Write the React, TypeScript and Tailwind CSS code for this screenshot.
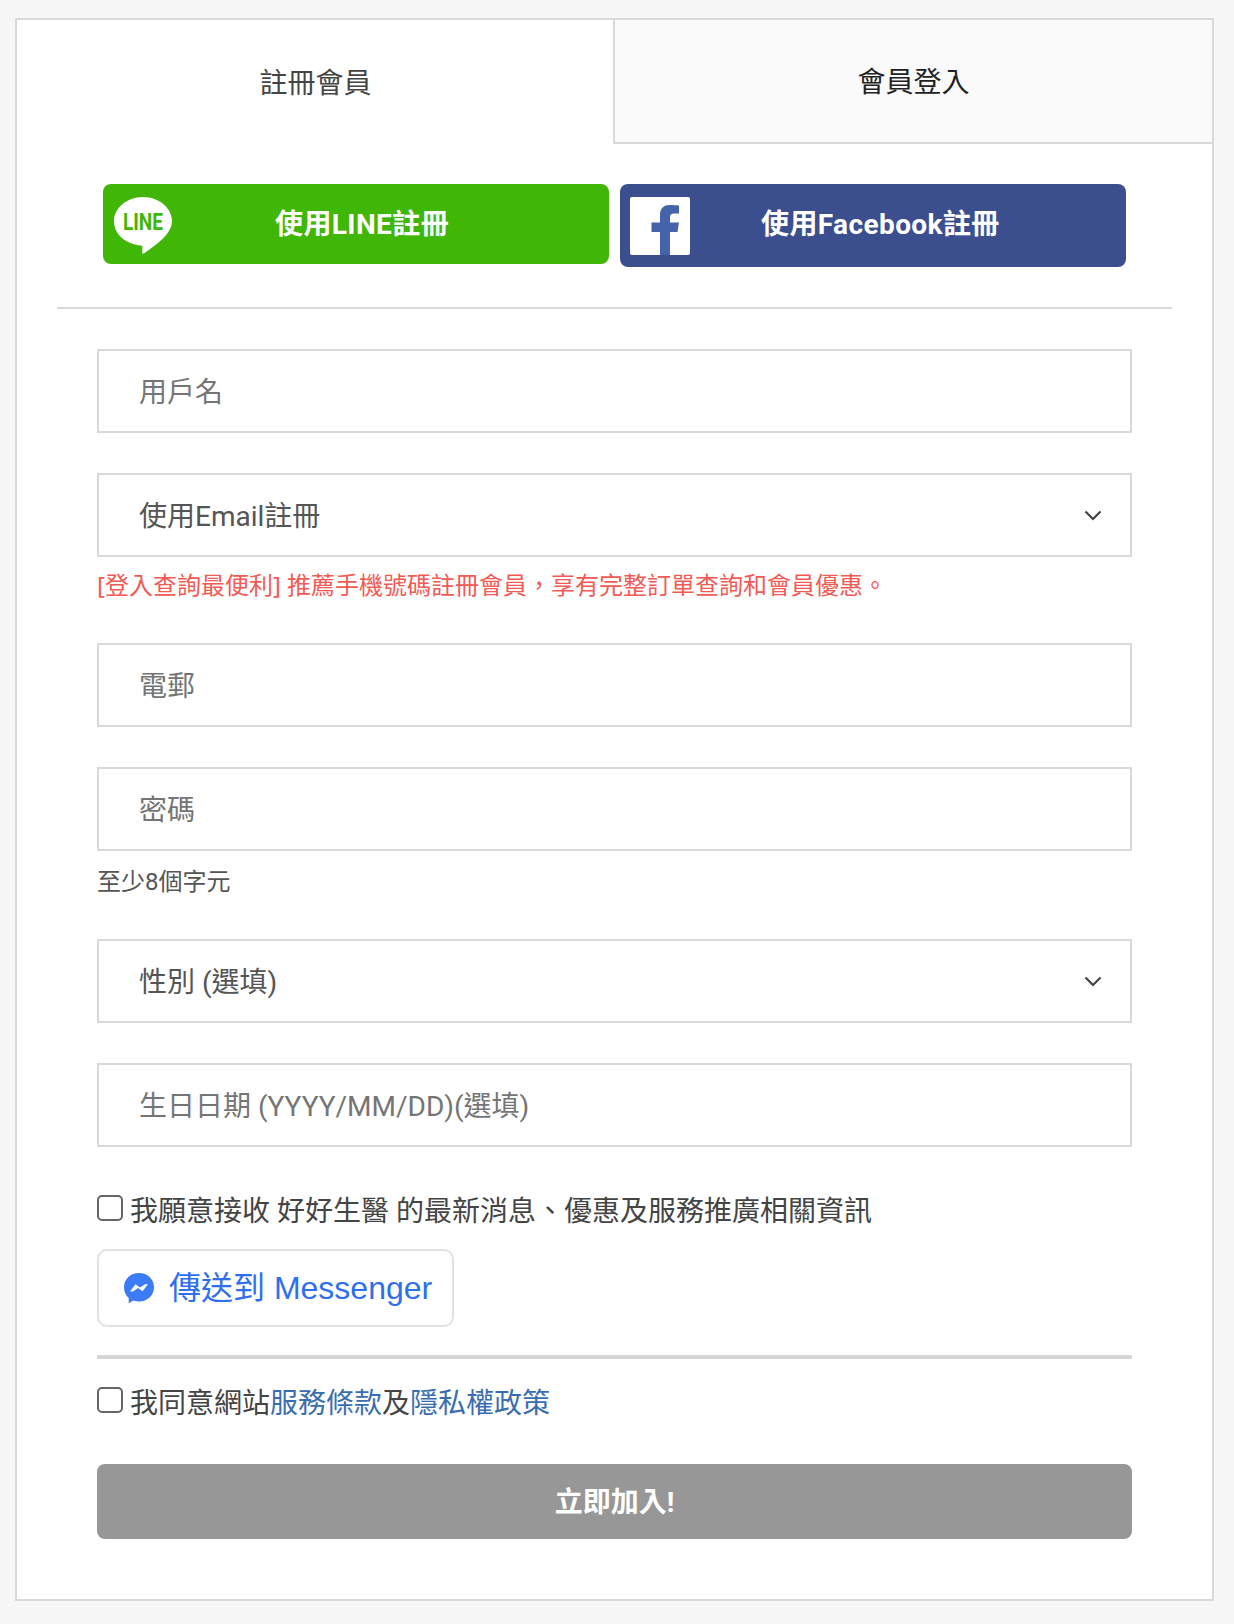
import React from "react";

const fieldClass =
  "flex h-[84px] items-center border-2 border-[#d9d9d9] bg-white pl-[40px] pr-[28px] pt-[3px] text-[28px] leading-none";

const Chevron = () => (
  <svg width="18" height="11" viewBox="0 0 18 11" fill="none" stroke="#444444" strokeWidth="2.2" className="mb-[3px] shrink-0">
    <path d="M1.5 1.5 L9 9 L16.5 1.5" />
  </svg>
);

const LineLogo = () => (
  <svg width="60" height="58" viewBox="0 0 60 58" className="mt-[2px] shrink-0">
    <path d="M30 1C14 1 1 12 1 25c0 14 12 23 27 24.500.8.1 1.400.8 1.400 1.600l-.2 5.400c0 1 1 1.400 1.700.9C40 51 59 39 59 25 59 12 46 1 30 1Z" fill="#ffffff" />
    <text x="30" y="34" textAnchor="middle" fontSize="24" fontWeight="700" fill="#40b606" fontFamily="Roboto, sans-serif" textLength="40" lengthAdjust="spacingAndGlyphs">
      LINE
    </text>
  </svg>
);

const FacebookLogo = () => (
  <svg width="60" height="58" viewBox="0 0 60 58" className="shrink-0">
    <rect width="60" height="58" rx="2" fill="#ffffff" />
    <path d="M30 58V35h-8.500v-9.500H30V18c0-7 4-10 10-10 3 0 7 .2 9 .5v8h-5c-3 0-4 1.500-4 4v5h9l-1.500 9.500H40v23Z" fill="#4463ab" />
  </svg>
);

const MessengerLogo = () => (
  <svg width="32" height="32" viewBox="0 0 32 32" className="shrink-0">
    <path d="M16 1C7.500 1 1 7 1 15.300c0 4.400 1.800 8.200 4.700 10.800v5.200l4.800-2.700c1.700.6 3.500.9 5.500.9 8.500 0 15-6 15-14.200S24.500 1 16 1Z" fill="#3b7bf6" />
    <path d="M7 19.500l5.500-7.200 4.500 3.300 5-3.300 3 0-5.500 7-4.500-3.300-5 3.500Z" fill="#ffffff" />
  </svg>
);

const Checkbox = () => (
  <span className="mb-[4px] h-[26px] w-[26px] shrink-0 rounded-[5px] border-2 border-[#666666] bg-white" />
);

export default function App() {
  return (
    <div className="min-h-[1624px] bg-[#f7f7f7] pl-[15px] pt-[18px] font-['Roboto','Noto_Sans_CJK_TC',sans-serif]">
      <div className="h-[1583px] w-[1199px] border-2 border-[#d9d9d9] bg-white">
        {/* tabs */}
        <div className="flex h-[124px]">
          <div className="flex w-[596px] items-center justify-center pl-[1px] pt-[3px] text-[28px] text-[#444444]">註冊會員</div>
          <div className="flex flex-1 items-center justify-center rounded-bl-[2px] border-b-2 border-l-2 border-[#d9d9d9] bg-[#fafafa] pt-[3px] text-[28px] text-[#222222]">
            會員登入
          </div>
        </div>

        {/* social */}
        <div className="mt-[40px] flex items-start gap-[11px] pl-[86px]">
          <div className="flex h-[80px] w-[506px] items-center rounded-[8px] bg-[#40b606] pl-[10px] text-white">
            <LineLogo />
            <span className="ml-[102px] mt-[2px] text-[28px] font-bold leading-none tracking-[0.4px]">使用LINE註冊</span>
          </div>
          <div className="flex h-[83px] w-[506px] items-center rounded-[8px] bg-[#3b4f8f] pl-[10px] text-white">
            <FacebookLogo />
            <span className="mb-[2px] ml-[71px] text-[28px] font-bold leading-none tracking-[0.4px]">使用Facebook註冊</span>
          </div>
        </div>

        <div className="mx-[40px] mt-[40px] h-[2px] bg-[#d9d9d9]" />

        {/* form */}
        <div className="mt-[40px] px-[80px]">
          <div className={`${fieldClass} text-[#757575]`}>用戶名</div>

          <div className={`${fieldClass} mt-[40px] justify-between text-[#555555]`}>
            <span>使用Email註冊</span>
            <Chevron />
          </div>
          <p className="mt-[12px] font-['Noto_Sans','Noto_Sans_CJK_TC',sans-serif] text-[24px] leading-[32px] text-[#f25a55]">
            [登入查詢最便利] 推薦手機號碼註冊會員，享有完整訂單查詢和會員優惠。
          </p>

          <div className={`${fieldClass} mt-[42px] text-[#757575]`}>電郵</div>
          <div className={`${fieldClass} mt-[40px] text-[#757575]`}>密碼</div>
          <p className="mt-[15px] text-[24px] leading-[32px] text-[#555555]">至少8個字元</p>

          <div className={`${fieldClass} mt-[41px] justify-between text-[#555555]`}>
            <span>性別 (選填)</span>
            <Chevron />
          </div>
          <div className={`${fieldClass} mt-[40px] text-[#757575]`}>生日日期 (YYYY/MM/DD)(選填)</div>

          <label className="mt-[43px] flex h-[40px] items-center gap-[7px] text-[28px] text-[#444444]">
            <Checkbox />
            <span className="pt-[3px]">我願意接收 好好生醫 的最新消息、優惠及服務推廣相關資訊</span>
          </label>

          <div className="mt-[19px] flex h-[78px] w-[357px] items-center gap-[14px] rounded-[10px] border-2 border-[#e2e2e2] bg-white pl-[24px] font-['Liberation_Sans','Noto_Sans_CJK_TC',sans-serif] text-[32px] text-[#2f6fed]">
            <MessengerLogo />
            <span>傳送到 Messenger</span>
          </div>

          <div className="mt-[28px] h-[4px] bg-[#d6d6d6]" />

          <label className="mt-[23px] flex h-[40px] items-center gap-[7px] text-[28px] text-[#444444]">
            <Checkbox />
            <span className="pt-[3px]">
              我同意網站<span className="text-[#3a6db0]">服務條款</span>及<span className="text-[#3a6db0]">隱私權政策</span>
            </span>
          </label>

          <button className="mt-[42px] flex h-[75px] w-full items-center justify-center rounded-[8px] bg-[#979797] pt-[2px] text-[28px] font-bold text-white">
            立即加入!
          </button>
        </div>
      </div>
    </div>
  );
}
